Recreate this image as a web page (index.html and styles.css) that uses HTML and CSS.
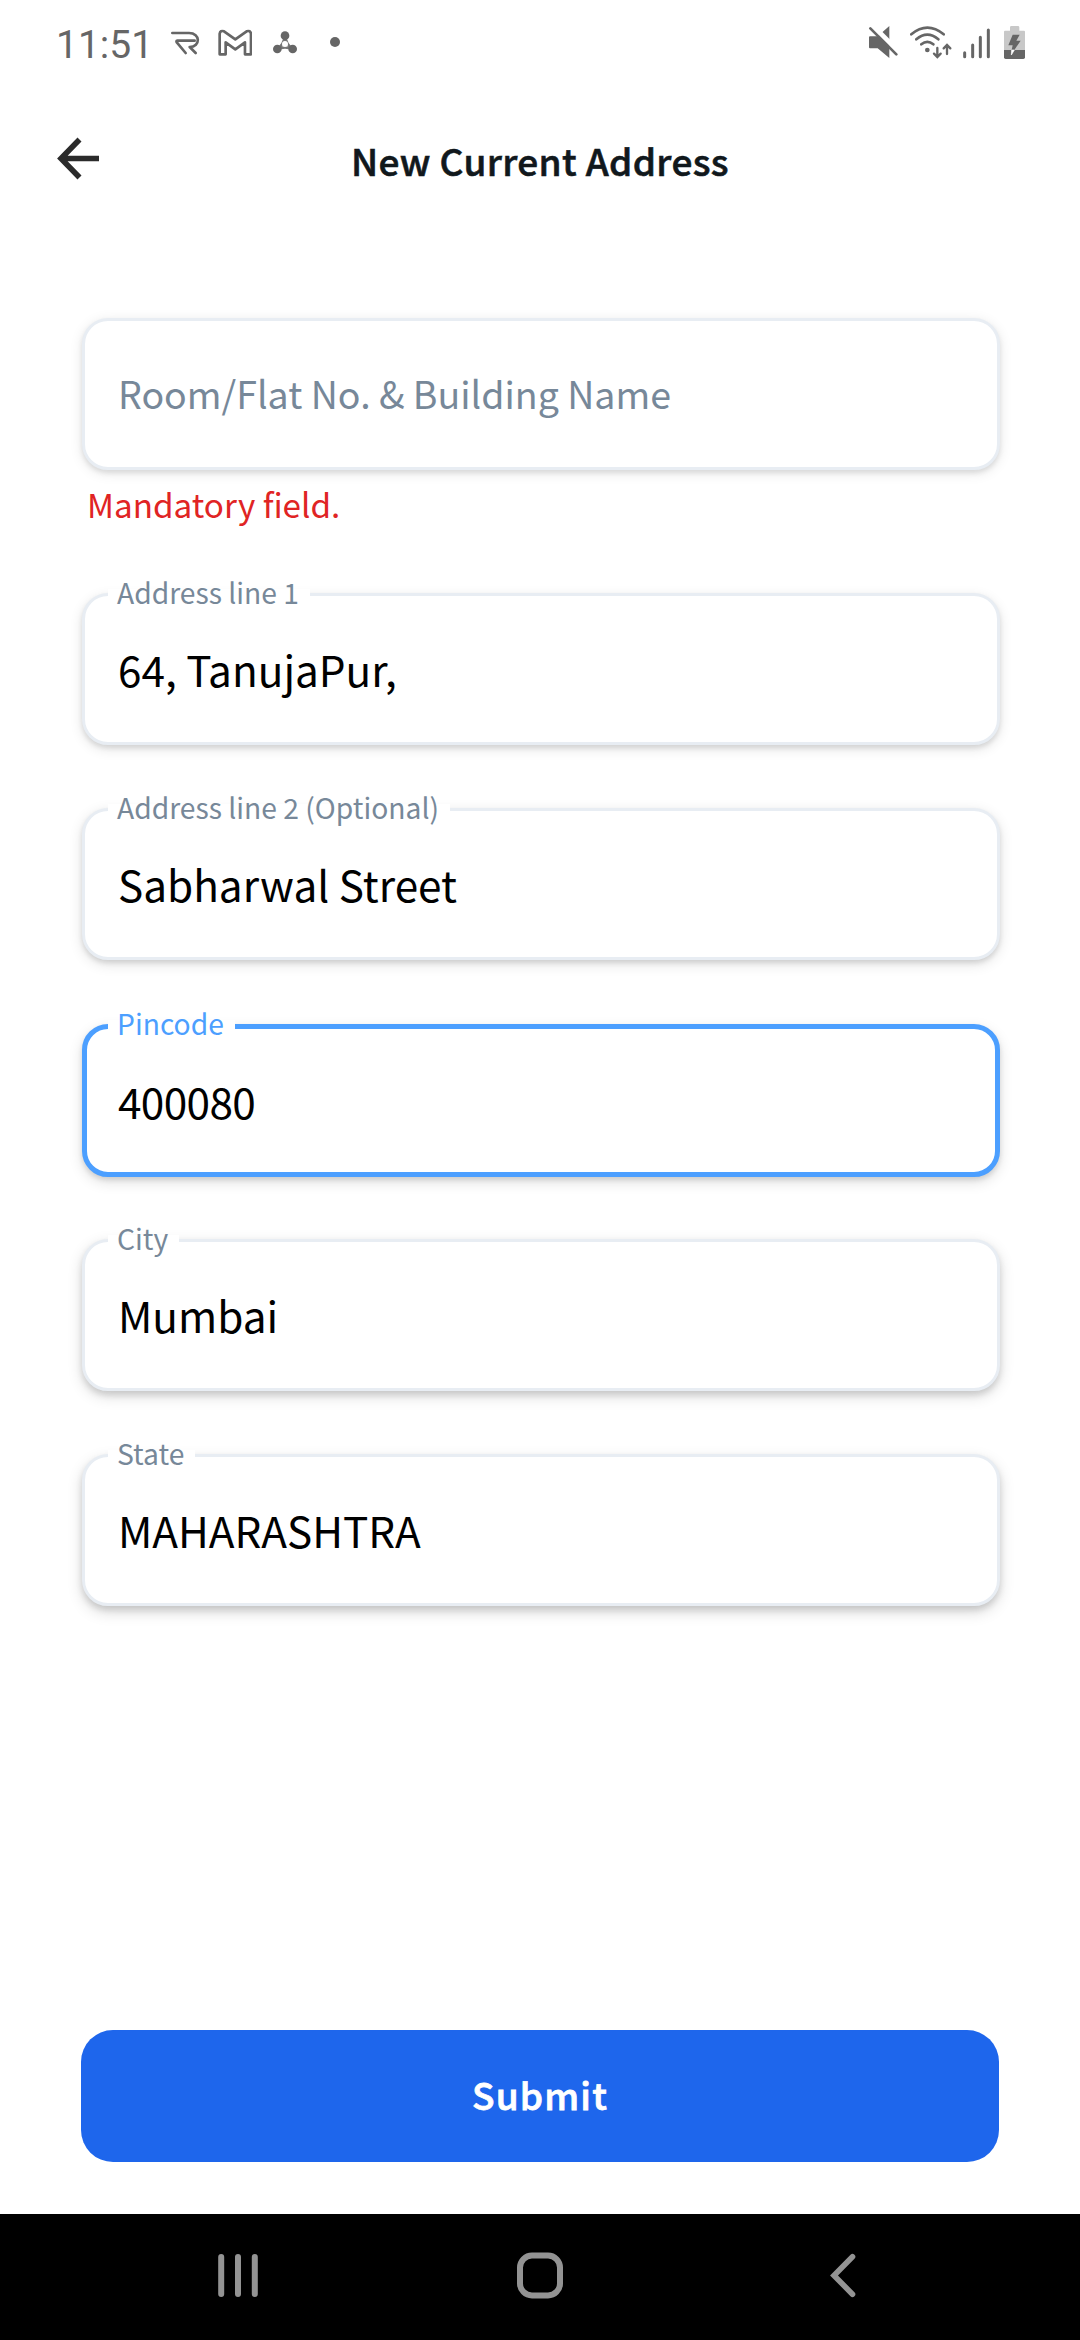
FILE: index.html
```html
<!DOCTYPE html>
<html lang="en">
<head>
<meta charset="utf-8">
<title>New Current Address</title>
<link rel="stylesheet" href="styles.css">
</head>
<body>
<div class="screen">
  <div class="status-bar">
    <span class="clock">11:51</span>
    <svg class="icon-r" viewBox="390 60 90 75" fill="none" stroke="#666" stroke-width="8" stroke-linecap="round" stroke-linejoin="round"><path d="M397 69H447C482 69 482 110 449 111L467 129"/><path d="M464 92H412Q407 92 411 98L437 129"/></svg>
    <svg class="icon-m" viewBox="530 52 106 87" fill="none" stroke="#666" stroke-width="8" stroke-linejoin="round"><path d="M538 131V69Q540 58 551 62L585 86L619 62Q630 58 632 69V131H614V95L585 116L556 95V131Z"/></svg>
    <svg class="icon-share" viewBox="697 60 78 72"><path d="M736 77Q733 104 713 117Q736 107 759 117Q739 104 736 77Z" fill="none" stroke="#777" stroke-width="8"/><circle cx="736" cy="77" r="13" fill="#666"/><circle cx="713" cy="117" r="13" fill="#666"/><circle cx="759" cy="117" r="13" fill="#666"/><circle cx="736" cy="102" r="9" fill="#fff"/></svg>
    <span class="more-dot"></span>
    <div class="system-icons">
      <svg class="icon-mute" viewBox="54 45 90 105"><path d="M60 79H83L118 48V144L83 115H60Q57 115 57 112V82Q57 79 60 79Z" fill="#666"/><path d="M66 45L150 129" stroke="#fff" stroke-width="15"/><path d="M61 55L139 133" stroke="#666" stroke-width="8" stroke-linecap="round"/></svg>
      <svg class="icon-wifi" viewBox="177 45 129 105" fill="none" stroke="#666" stroke-width="8" stroke-linecap="round"><path d="M184 73Q232 33 281 73M199 88Q232 60 265 88M214 103Q232 88 250 103"/><circle cx="232" cy="120" r="7" fill="#666" stroke="none"/><path stroke-width="7" d="M262 114V139M252 131L262 141L272 131M291 132V106M281 115L291 105L301 115"/></svg>
      <svg class="icon-signal" viewBox="336 45 87 105" fill="none" stroke="#666" stroke-width="9" stroke-linecap="round"><path d="M344 128V140M368 105V140M391 82V140M415 60V140"/></svg>
      <svg class="icon-battery" viewBox="459 45 69 105"><path d="M480 62V52Q480 48 484 48H504Q508 48 508 52V62H522Q525 62 525 65V120H462V65Q462 62 465 62Z" fill="#c8c8c8"/><path d="M462 120H525V142Q525 147 520 147H467Q462 147 462 142Z" fill="#666"/><path d="M488 74H509L499 92H512L493 120H485L488 106H475Z" fill="#666"/><path d="M493 120L484 135L485 120Z" fill="#fff" stroke="#fff" stroke-width="2"/></svg>
    </div>
  </div>

  <header class="app-bar">
    <svg class="back" viewBox="56 137 44 43" fill="none" stroke="#2b2b2b" stroke-width="5.6"><path d="M99 158.5H61M79.5 139.5L61 158.5L79.5 177.5"/></svg>
    <h1 class="title">New Current Address</h1>
  </header>

  <form class="form">
    <div class="field shade-1"><span class="placeholder">Room/Flat No. &amp; Building Name</span></div>
    <p class="error">Mandatory field.</p>
    <div class="field shade-2"><span class="label">Address line 1</span><span class="value">64, TanujaPur,</span></div>
    <div class="field shade-3"><span class="label">Address line 2 (Optional)</span><span class="value">Sabharwal Street</span></div>
    <div class="field focused shade-4"><span class="label">Pincode</span><span class="value numeric">400080</span></div>
    <div class="field shade-5"><span class="label">City</span><span class="value">Mumbai</span></div>
    <div class="field shade-6"><span class="label">State</span><span class="value">MAHARASHTRA</span></div>
  </form>

  <button class="submit" type="button">Submit</button>

  <nav class="nav-bar">
    <svg viewBox="0 0 48 48" fill="none" stroke="#939393" stroke-width="6" stroke-linecap="round"><path d="M7.2 6V43M24 6V43M40.8 6V43"/></svg>
    <svg viewBox="0 0 48 48" fill="none" stroke="#939393" stroke-width="6"><rect x="4" y="4.5" width="40" height="40" rx="12"/></svg>
    <svg viewBox="0 0 48 48" fill="none" stroke="#939393" stroke-width="5.6" stroke-linecap="round"><path d="M33.5 5.8L15 24.5L33.5 43.2"/></svg>
  </nav>
</div>
</body>
</html>
```
FILE: styles.css
```css
* { box-sizing: border-box; }

body {
  margin: 0;
  background: #fff;
  font-family: "Noto Sans CJK JP", "Noto Sans", sans-serif;
}

.screen {
  width: 1080px;
  height: 2340px;
  display: flex;
  flex-direction: column;
  overflow: hidden;
}

.status-bar {
  height: 84px;
  padding: 0 54px 0 56px;
  display: flex;
  align-items: center;
  flex: none;
}

.clock {
  width: 114px;
  padding-top: 5px;
  font: 400 39px/46px Roboto, sans-serif;
  color: #666;
}

.icon-r { width: 30px; height: 25px; }
.icon-m { width: 35.3px; height: 29px; margin-left: 16.7px; }
.icon-share { width: 26px; height: 24px; margin-left: 20px; }

.more-dot {
  width: 10px;
  height: 10px;
  margin-left: 32px;
  border-radius: 50%;
  background: #666;
}

.system-icons {
  display: flex;
  margin-left: auto;
}

.system-icons svg { height: 35px; }
.icon-mute { width: 30px; }
.icon-wifi { width: 43px; margin-left: 11px; }
.icon-signal { width: 29px; margin-left: 10px; }
.icon-battery { width: 23px; margin-left: 12px; }

.app-bar {
  height: 234px;
  padding: 53px 56px 0;
  display: grid;
  grid-template-columns: 44px 1fr 44px;
  align-items: start;
  flex: none;
}

.back { width: 44px; height: 43px; }

.title {
  margin: 0;
  font-size: 37px;
  line-height: 46px;
  font-weight: 500;
  letter-spacing: .35px;
  color: #11181c;
  -webkit-text-stroke: .6px #11181c;
  text-align: center;
}

.form {
  padding: 0 80px 0 82px;
  display: flex;
  flex-direction: column;
}

.field {
  position: relative;
  height: 152px;
  margin-bottom: 63px;
  padding-left: 33px;
  display: flex;
  align-items: center;
  border: 3px solid #e8edf3;
  border-radius: 26px;
  background: #fff;
  font-size: 42.3px;
  line-height: 62px;
  color: #000;
}

.placeholder {
  padding-bottom: 2px;
  font-size: 37.5px;
  color: #778899;
}

.numeric { letter-spacing: -.6px; }

.error {
  height: 60px;
  margin: -63px 0 63px;
  padding: 4px 0 0 5px;
  font-size: 33.25px;
  line-height: 60px;
  color: #e02424;
}

.label {
  position: absolute;
  top: -24px;
  left: 23px;
  padding: 0 11px 0 9px;
  background: linear-gradient(#fff, #fff) 0 17px / 100% 14px no-repeat;
  font-size: 28.25px;
  line-height: 40px;
  color: #778899;
  white-space: nowrap;
}

.focused {
  height: 153px;
  margin-top: 1px;
  margin-bottom: 62px;
  padding-left: 31px;
  border: 5px solid #4c9fff;
}

.focused .label {
  top: -26px;
  left: 21px;
  color: #4c9fff;
}

.shade-1 { box-shadow: 0 3px 5px rgba(0, 0, 0, .09), 0 3px 13px rgba(0, 0, 0, .1); }
.shade-2 { box-shadow: 0 3px 5px rgba(0, 0, 0, .1), 0 4px 13px rgba(0, 0, 0, .11); }
.shade-3 { box-shadow: 0 3px 5px rgba(0, 0, 0, .11), 0 4px 14px rgba(0, 0, 0, .12); }
.shade-4 { box-shadow: 0 3px 5px rgba(0, 0, 0, .11), 0 5px 14px rgba(0, 0, 0, .13); }
.shade-5 { box-shadow: 0 4px 6px rgba(0, 0, 0, .12), 0 5px 15px rgba(0, 0, 0, .14); }
.shade-6 { box-shadow: 0 4px 6px rgba(0, 0, 0, .12), 0 6px 15px rgba(0, 0, 0, .15); }

.submit {
  flex: none;
  width: 918px;
  height: 132px;
  margin: auto 0 52px 81px;
  padding: 0 0 4px;
  border: 0;
  border-radius: 32px;
  background: #1e66ec;
  color: #fff;
  font: 500 37px/54px "Noto Sans CJK JP", "Noto Sans", sans-serif;
  letter-spacing: 1.2px;
  -webkit-text-stroke: .8px #fff;
}

.nav-bar {
  flex: none;
  height: 126px;
  padding: 0 86px 5px 87px;
  display: grid;
  grid-template-columns: repeat(3, 1fr);
  align-items: center;
  justify-items: center;
  background: #000;
}

.nav-bar svg { width: 48px; height: 48px; }
```
